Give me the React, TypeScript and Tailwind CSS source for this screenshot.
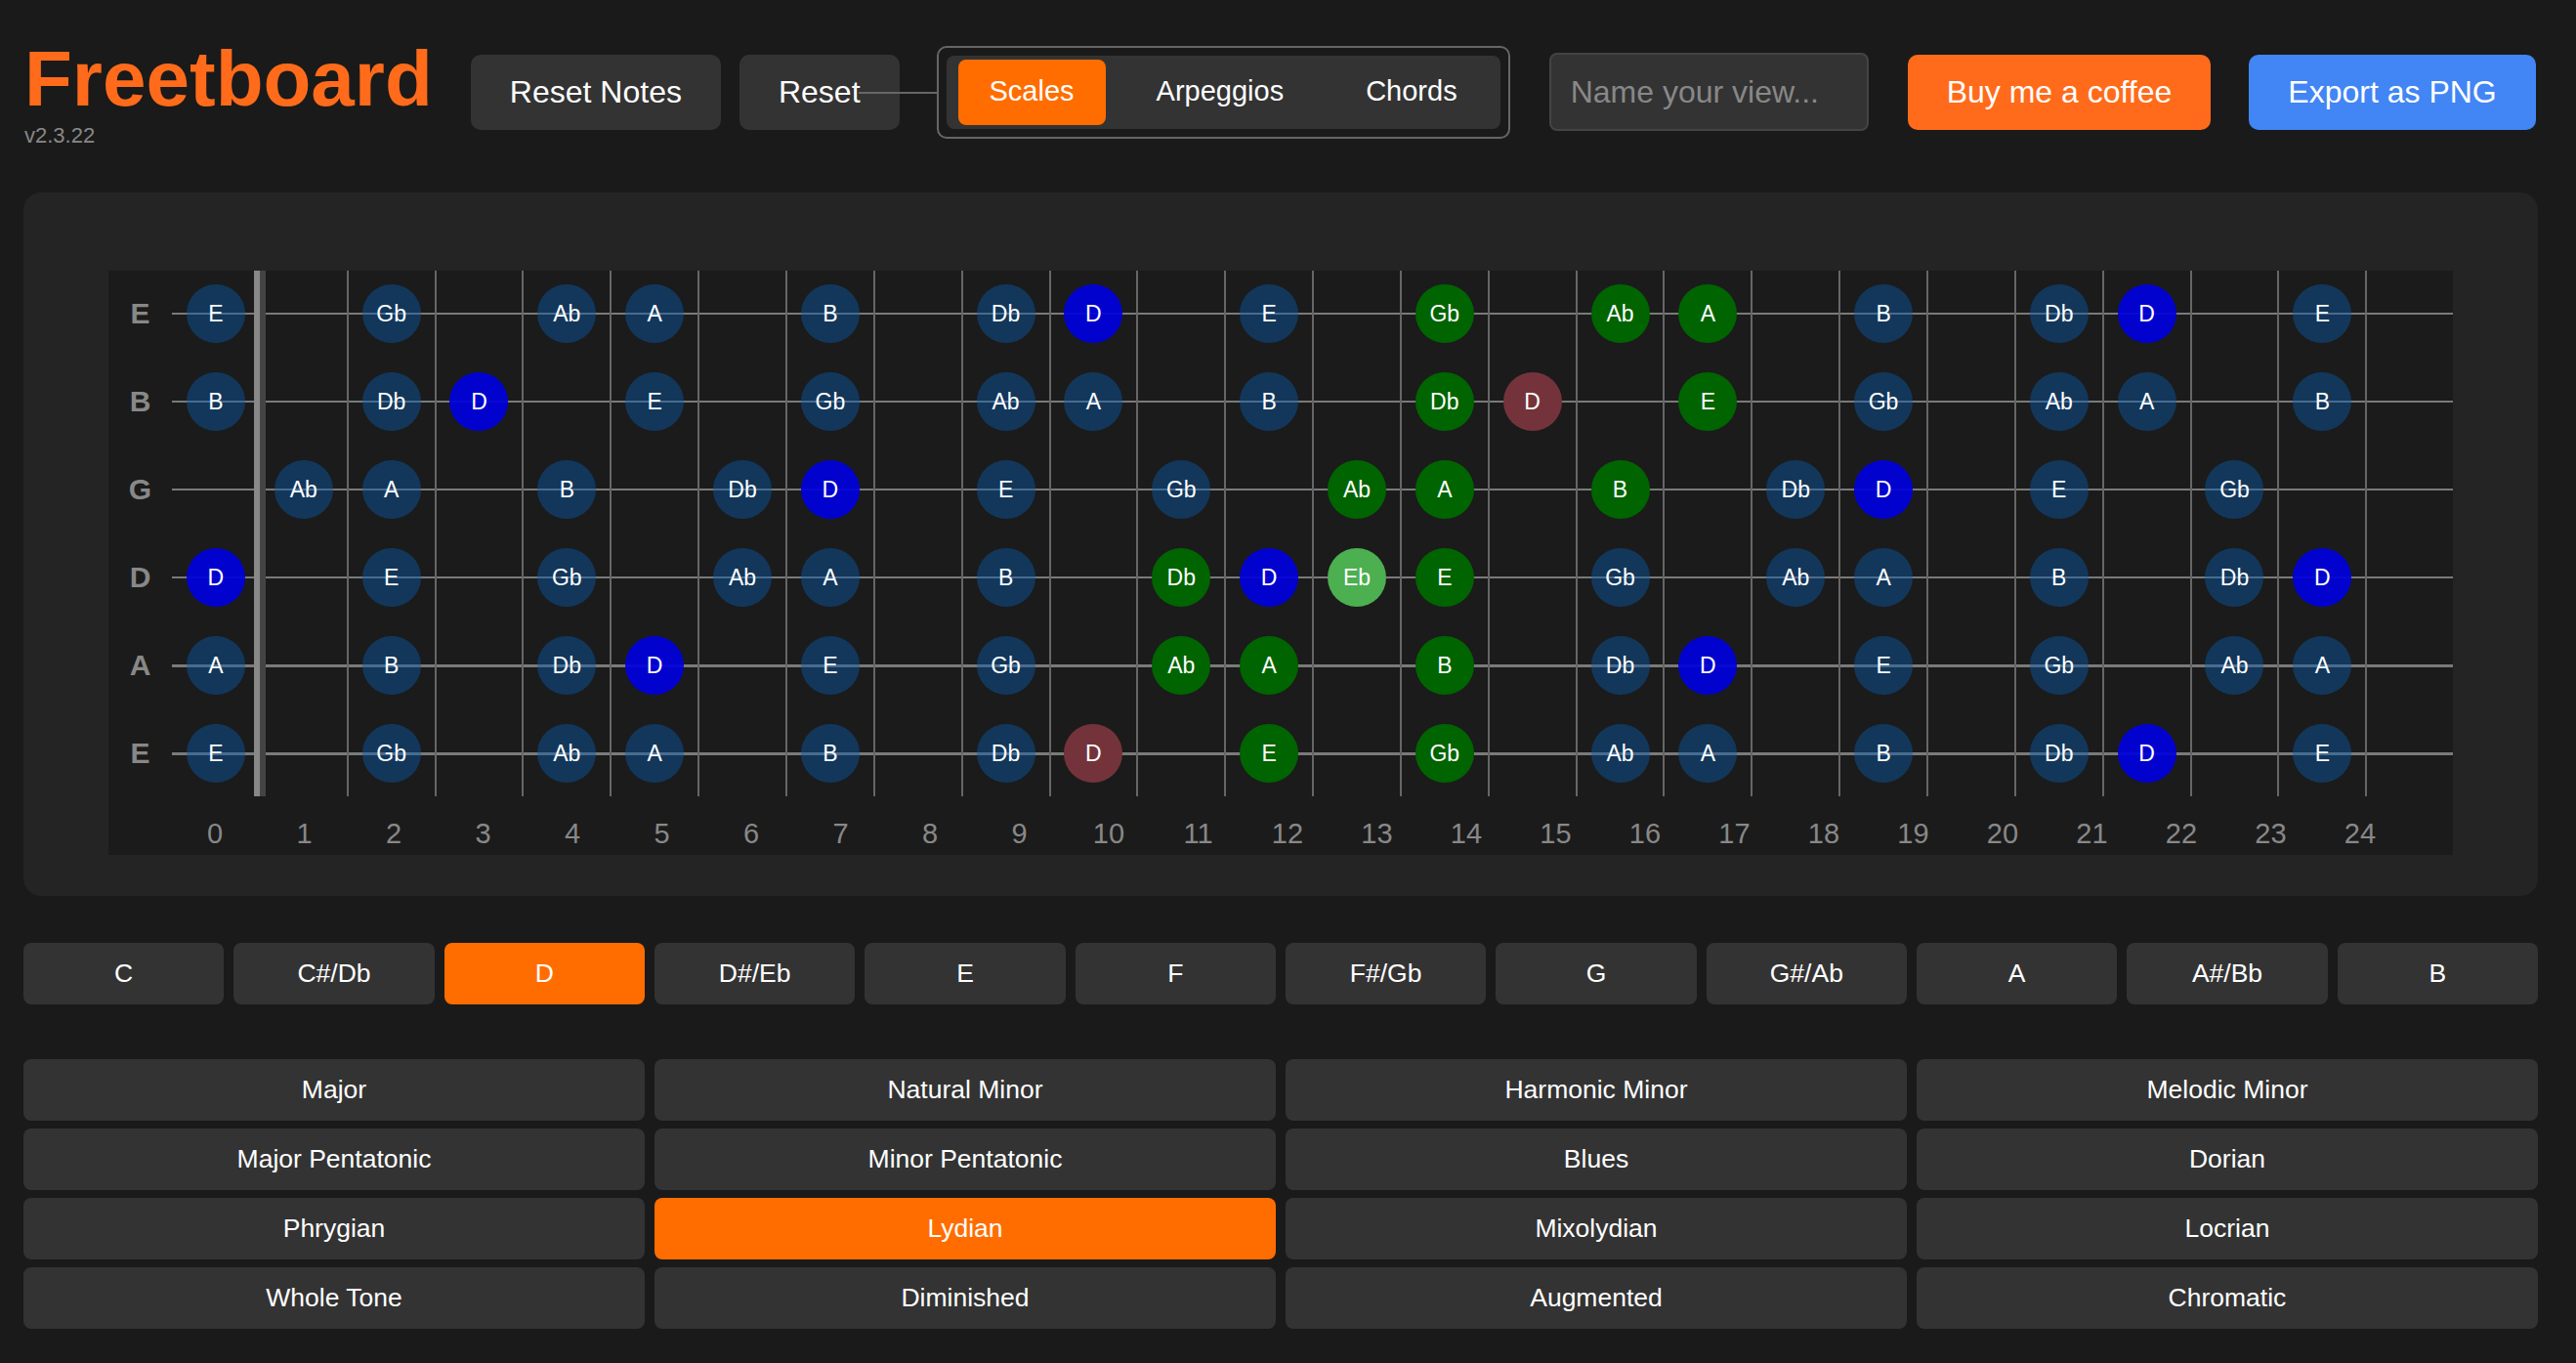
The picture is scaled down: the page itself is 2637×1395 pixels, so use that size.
import React from 'react'

const KEYS = ['C', 'C#/Db', 'D', 'D#/Eb', 'E', 'F', 'F#/Gb', 'G', 'G#/Ab', 'A', 'A#/Bb', 'B']

const SCALES = [
  'Major', 'Natural Minor', 'Harmonic Minor', 'Melodic Minor',
  'Major Pentatonic', 'Minor Pentatonic', 'Blues', 'Dorian',
  'Phrygian', 'Lydian', 'Mixolydian', 'Locrian',
  'Whole Tone', 'Diminished', 'Augmented', 'Chromatic',
]

const NAMES = ['C', 'Db', 'D', 'Eb', 'E', 'F', 'Gb', 'G', 'Ab', 'A', 'Bb', 'B']
const STRINGS = ['E', 'B', 'G', 'D', 'A', 'E']
const OPEN = [4, 11, 7, 2, 9, 4]
const STRING_H = [2, 2, 2, 2, 3, 3]
// D lydian: D E F# G# A B C#
const IN_SCALE = new Set([2, 4, 6, 8, 9, 11, 1])

// highlighted box (green), extra notes
const GREEN: Record<number, number[]> = {
  0: [14, 16, 17],
  1: [14, 17],
  2: [13, 14, 16],
  3: [11, 14],
  4: [11, 12, 14],
  5: [12, 14],
}
const RED: Record<number, number[]> = { 1: [15], 5: [10] }
const LIGHT: Record<number, number[]> = { 3: [13] }

const COL = 89.85
const COL_X = 65
const ROW = 90

function noteColor(s: number, f: number, pc: number) {
  if (LIGHT[s]?.includes(f)) return 'bg-[#4caf50]'
  if (RED[s]?.includes(f)) return 'bg-[#74333a]'
  if (GREEN[s]?.includes(f)) return 'bg-[#006400]'
  if (pc === 2) return 'bg-[rgba(0,0,220,0.93)]'
  return 'bg-[rgba(8,90,170,0.45)]'
}

function Fretboard() {
  const notes: { s: number; f: number; name: string; cls: string }[] = []
  STRINGS.forEach((_, s) => {
    for (let f = 0; f <= 24; f++) {
      const pc = (OPEN[s] + f) % 12
      const extra = LIGHT[s]?.includes(f)
      if (!IN_SCALE.has(pc) && !extra) continue
      notes.push({ s, f, name: NAMES[pc], cls: noteColor(s, f, pc) })
    }
  })

  return (
    <div className="relative mx-auto w-[2400px] h-[598px] bg-[#1b1b1b]">
      {/* strings */}
      {STRINGS.map((_, s) => (
        <div
          key={'s' + s}
          className="absolute left-[65px] right-0 bg-[#7a7a7a]"
          style={{ top: 44 + ROW * s - STRING_H[s] / 2, height: STRING_H[s] }}
        />
      ))}

      {/* frets */}
      {Array.from({ length: 24 }, (_, i) => i + 1).map(k => (
        <div
          key={'f' + k}
          className="absolute top-0 h-[538px] w-[2px] bg-[#666]"
          style={{ left: COL_X + COL * (k + 1) - 1 }}
        />
      ))}

      {/* nut */}
      <div className="absolute top-0 left-[149px] h-[538px] flex">
        <div className="w-[6px] bg-[#888]" />
        <div className="w-[6px] bg-[#444]" />
      </div>

      {/* string names */}
      {STRINGS.map((n, s) => (
        <div
          key={'l' + s}
          className="absolute left-0 w-[65px] text-center text-[30px] leading-[34px] font-bold text-[#888]"
          style={{ top: 44 + ROW * s - 17 }}
        >
          {n}
        </div>
      ))}

      {/* notes */}
      {notes.map(n => (
        <div
          key={n.s + '-' + n.f}
          className={`absolute w-[60px] h-[60px] rounded-full flex items-center justify-center text-white text-[23px] ${n.cls}`}
          style={{ left: COL_X + COL * (n.f + 0.5) - 30, top: 44 + ROW * n.s - 30 }}
        >
          {n.name}
        </div>
      ))}

      {/* fret numbers */}
      {Array.from({ length: 25 }, (_, i) => i).map(i => (
        <div
          key={'n' + i}
          className="absolute w-[60px] text-center text-[29px] leading-[34px] text-[#888]"
          style={{ left: 109 + 91.5 * i - 30, top: 559 }}
        >
          {i}
        </div>
      ))}
    </div>
  )
}

const btn = 'shrink-0 whitespace-nowrap h-[77px] px-[40px] rounded-[10px] text-[32px]'

export default function App() {
  return (
    <div className="min-h-screen bg-[#1a1a1a] text-white font-['Liberation_Sans',Arial,sans-serif]">
      <div className="w-[2574px] ml-[24px]">
        {/* Header */}
        <header className="flex items-center pt-[36px] whitespace-nowrap">
          <div className="shrink-0 flex flex-col pl-[1px]">
            <h1 className="text-[80px] leading-[90px] font-bold text-[#ff6b1a]">Freetboard</h1>
            <span className="text-[22px] leading-[26px] text-[#888]">v2.3.22</span>
          </div>

          <button className={`${btn} ml-[39px] bg-[#333]`}>Reset Notes</button>
          <div className="relative shrink-0 ml-[19px]">
            <button className={`${btn} px-[39px] bg-[#333]`}>Reset</button>
            <div className="absolute top-[38px] left-[122px] w-[80px] h-[2px] bg-[#666]" />
          </div>

          <div className="shrink-0 ml-[38px] border-2 border-[#666] rounded-[10px] p-[8px]">
            <div className="flex gap-[20px] bg-[#333] rounded-[8px] px-[12px] py-[4px]">
              <button className="h-[67px] px-[32px] rounded-[8px] bg-[#ff6d00] text-[29px]">Scales</button>
              <button className="h-[67px] px-[32px] rounded-[8px] text-[29px]">Arpeggios</button>
              <button className="h-[67px] px-[32px] rounded-[8px] text-[29px]">Chords</button>
            </div>
          </div>

          <input
            placeholder="Name your view..."
            className="shrink-0 ml-[40px] w-[327px] h-[80px] px-[20px] rounded-[8px] bg-[#333] border-2 border-[#444] text-[32px] text-white placeholder:text-[#888] outline-none"
          />

          <button className={`${btn} ml-[40px] bg-[#ff6b1a]`}>Buy me a coffee</button>
          <button className={`${btn} ml-[39px] bg-[#4285f4]`}>Export as PNG</button>
        </header>

        {/* Fretboard panel */}
        <section className="mt-[45px] rounded-[18px] bg-[#242424] pt-[80px] pb-[42px]">
          <Fretboard />
        </section>

        {/* Keys */}
        <div className="mt-[48px] grid grid-cols-12 gap-[10px]">
          {KEYS.map(k => (
            <button
              key={k}
              className={`h-[63px] rounded-[8px] text-[26.5px] ${k === 'D' ? 'bg-[#ff6d00]' : 'bg-[#333]'}`}
            >
              {k}
            </button>
          ))}
        </div>

        {/* Scales */}
        <div className="mt-[56px] grid grid-cols-4 gap-x-[10px] gap-y-[8px]">
          {SCALES.map(s => (
            <button
              key={s}
              className={`h-[63px] rounded-[8px] text-[26.5px] ${s === 'Lydian' ? 'bg-[#ff6d00]' : 'bg-[#333]'}`}
            >
              {s}
            </button>
          ))}
        </div>
      </div>
    </div>
  )
}
